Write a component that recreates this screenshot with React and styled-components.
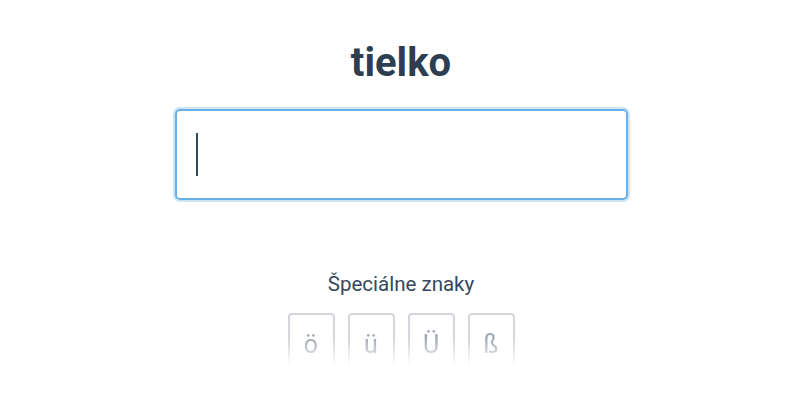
import React from 'react';
import styled, { createGlobalStyle } from 'styled-components';

const GlobalStyle = createGlobalStyle`
    html, body {
        margin: 0;
        padding: 0;
        background: #ffffff;
        font-family: Roboto, "Liberation Sans", sans-serif;
    }
`;

const Page = styled.div`
    display: flex;
    flex-direction: column;
    align-items: center;
    padding-top: 39px;
    padding-left: 2px;
    height: 400px;
    box-sizing: border-box;
    overflow: hidden;
`;

const Title = styled.h1`
    margin: 0;
    font-size: 40px;
    line-height: 47px;
    font-weight: 700;
    color: #2c3e50;
`;

const InputBox = styled.div`
    margin-top: 23px;
    width: 453px;
    height: 91px;
    box-sizing: border-box;
    border: 2px solid #6ab0e6;
    border-radius: 5px;
    box-shadow: 0 0 0 2px #cde4f7;
    display: flex;
    align-items: center;
    padding-left: 19px;
`;

const Caret = styled.span`
    width: 2px;
    height: 43px;
    background: #34495e;
`;

const Label = styled.div`
    margin-top: 71px;
    font-size: 20.5px;
    line-height: 26px;
    color: #34495e;
`;

const KeyRow = styled.div`
    margin-top: 16px;
    display: flex;
    gap: 13px;
    -webkit-mask-image: linear-gradient(to bottom, #000 45%, transparent 95%);
    mask-image: linear-gradient(to bottom, #000 45%, transparent 95%);
`;

const Key = styled.button`
    width: 47px;
    height: 56px;
    box-sizing: border-box;
    border: 2px solid #d3d6da;
    border-radius: 4px;
    background: #ffffff;
    color: #a3aab2;
    font-family: Roboto, "Liberation Sans", sans-serif;
    font-size: 25px;
    padding: 6px 0 0;
    cursor: pointer;
`;

const specialChars = ['ö', 'ü', 'Ü', 'ß'];

export default function App() {
    return (
        <>
            <GlobalStyle />
            <Page>
                <Title>tielko</Title>
                <InputBox>
                    <Caret />
                </InputBox>
                <Label>Špeciálne znaky</Label>
                <KeyRow>
                    {specialChars.map((c) => (
                        <Key key={c}>{c}</Key>
                    ))}
                </KeyRow>
            </Page>
        </>
    );
}
